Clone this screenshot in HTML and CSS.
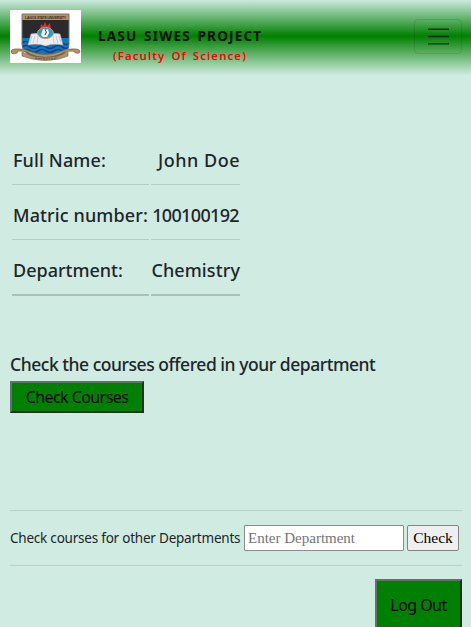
FILE: index.html
```html
<!DOCTYPE html>
<html lang="en">
<head>
<meta charset="utf-8">
<title>LASU SIWES Project</title>
<link rel="stylesheet" href="styles.css">
</head>
<body>
<header class="navbar">
  <svg class="logo" viewBox="0 0 71 53" role="img" aria-label="Lagos State University crest">
    <defs><clipPath id="shield"><path d="M12 4H59V34C59 44 48 47 35.5 50C23 47 12 44 12 34Z"/></clipPath></defs>
    <rect width="71" height="53" fill="#fff"/>
    <g clip-path="url(#shield)">
      <rect x="12" y="4" width="47" height="46" fill="#2b292c"/>
      <rect x="12" y="4" width="47" height="6" fill="#b9915c"/>
      <rect x="12" y="28" width="47" height="22" fill="#087bc0"/>
      <path d="M12 33q4-3 8 0t8 0 8 0 8 0 8 0 8 0M12 37q4-3 8 0t8 0 8 0 8 0 8 0 8 0M12 41q4-3 8 0t8 0 8 0 8 0 8 0 8 0" fill="none" stroke="#173d87" stroke-width="1.7"/>
    </g>
    <path d="M12 4H59V34C59 44 48 47 35.5 50C23 47 12 44 12 34Z" fill="none" stroke="#77747a" stroke-width="1"/>
    <text class="crest-text" x="35.5" y="8.7" text-anchor="middle" textLength="41">LAGOS STATE UNIVERSITY</text>
    <path d="M30 20L31 14L33 16L35 12L37 16L40 13L41 20Z" fill="#e52a20"/>
    <path d="M21 24Q29 22 35.5 26Q43 22 50 24L53 35Q43 33 35.5 36Q28 33 18 35Z" fill="#eeeef0" stroke="#a6a6ad" stroke-width=".6"/>
    <path d="M22 26l-2 7M25 26l-2 7M28 26l-1 7M43 26l1 7M46 26l2 7M49 26l2 7" stroke="#b8b8bf" stroke-width=".7"/>
    <ellipse cx="35.5" cy="23" rx="8" ry="5.5" fill="#24a0cf" stroke="#c99a55" stroke-width="1"/>
    <path d="M31 25l2-6 3 1 2-1 1 4-2 4h-4Z" fill="#f5f5f5"/>
    <path d="M35 20l1.5 2-1.5 3" fill="none" stroke="#333" stroke-width="1"/>
    <path d="M5 39Q1 39 1 42Q2 45 7 43L8 41Q18 41 20 44Q35 51 51 44Q54 41 63 41Q67 45 70 42Q70 39 66 39Q57 38 49 42Q35 47 22 42Q14 38 5 39Z" fill="#b9915c" stroke="#745e45" stroke-width=".7"/>
    <path d="M12 42L22 46Q35 49 49 46L58 42V46L49 49Q35 52 22 49L12 46Z" fill="#b9915c" stroke="#745e45" stroke-width=".6"/>
    <path d="M25 48Q36 50 47 48" fill="none" stroke="#57483a" stroke-width="1" stroke-dasharray="2 .7"/>
  </svg>
  <div class="brand">
    <div class="brand-name">LASU SIWES PROJECT</div>
    <div class="brand-faculty">(Faculty Of Science)</div>
  </div>
  <button class="toggler" aria-label="Menu"><svg width="30" height="30" viewBox="0 0 30 30"><path d="M4 7h22M4 15h22M4 23h22" stroke="#000" stroke-opacity=".7" stroke-width="1.6" stroke-linecap="round"/></svg></button>
</header>
<main>
  <div class="details">
    <div class="cell"><span class="full-name">Full Name:</span></div><div class="cell value"><span class="john">John Doe</span></div>
    <div class="cell"><span class="matric">Matric number:</span></div><div class="cell value"><span class="number">100100192</span></div>
    <div class="cell last"><span class="dept">Department:</span></div><div class="cell value last"><span class="chem">Chemistry</span></div>
  </div>
  <h2>Check the courses offered in your department</h2>
  <button class="action courses">Check Courses</button>
  <form class="search">
    <label for="department">Check courses for other Departments</label>
    <input id="department" placeholder="Enter Department">
    <button class="check" type="button">Check</button>
  </form>
  <button class="action logout">Log Out</button>
</main>
</body>
</html>
```
FILE: styles.css
```css
* { box-sizing: border-box; }
body { margin: 0; height: 627px; overflow: hidden; background: #d0ebe1; color: #212529; font-family: "Noto Sans", sans-serif; }
.navbar { height: 75px; padding: 10px 9px 0 10px; display: flex; align-items: flex-start; background: linear-gradient(#cbe9de 0, green 36px, #d0ebe1 75px); }
.logo { width: 71px; height: 53px; flex: none; }
.crest-text { font: bold 3.5px "Liberation Sans", sans-serif; fill: #3b3028; }
.brand { margin: 16px 0 0 17px; width: 166px; white-space: nowrap; }
.brand-name { font-size: 13.5px; line-height: 20px; font-weight: 700; letter-spacing: 1.2px; word-spacing: 2px; color: #050c09; }
.brand-faculty { margin-left: 15px; font-size: 11.5px; line-height: 20px; font-weight: 600; letter-spacing: 1.05px; word-spacing: 2px; color: red; }
.toggler { margin: 9px 0 0 auto; width: 48px; height: 35px; padding: 0; border: 1px solid rgba(0,0,0,.1); border-radius: 4px; background: transparent; display: grid; place-items: center; }
.toggler svg { width: 27px; height: 27px; }
main { padding: 72px 9px 0 10px; display: flex; flex-direction: column; align-items: flex-start; }
.details { margin-left: 2px; display: grid; grid-template-columns: 137px 89px; column-gap: 2px; }
.cell { height: 38px; margin-bottom: 17px; padding-left: 1px; border-bottom: 1px solid #b5cec4; font-size: 18px; line-height: 26px; font-weight: 500; white-space: nowrap; }
.value { text-align: right; padding: 0; }
.full-name, .matric { letter-spacing: .12px; }
.john { letter-spacing: .5px; }
.number { letter-spacing: -.65px; margin-right: 1px; }
.chem { letter-spacing: .1px; }
.last { border-bottom: 2px solid #a9c1b7; height: 39px; }
h2 { margin: 38px 0 0; font-size: 17.5px; line-height: 26px; font-weight: 500; letter-spacing: -.46px; white-space: nowrap; }
.action { border: 2px solid; border-color: #5e7563 #252b26 #252b26 #5e7563; background: green; color: #000; font: 16px "Noto Sans", sans-serif; padding: 0; white-space: nowrap; }
.courses { width: 134px; height: 32px; margin-top: 4px; letter-spacing: -.58px; }
.search { width: 100%; height: 56px; margin-top: 97px; border: solid #b8d0c7; border-width: 1px 0; display: flex; align-items: center; white-space: nowrap; }
.search label { width: 234px; font-size: 13.5px; font-weight: 400; letter-spacing: -.22px; }
.search input { width: 160px; height: 26px; padding: 1px 3px; border: 1px solid #8c8c8c; border-radius: 1px; background: #fff; font: 15px "Liberation Serif", serif; }
.search input::placeholder { color: #757575; opacity: 1; }
.check { width: 52px; height: 26px; margin-left: 3px; padding: 0; border: 1px solid #858585; border-radius: 2px; background: #efefef; color: #000; font: 15.5px "Liberation Serif", serif; }
.logout { width: 87px; height: 52px; margin-top: 13px; align-self: flex-end; letter-spacing: -.55px; }
```
